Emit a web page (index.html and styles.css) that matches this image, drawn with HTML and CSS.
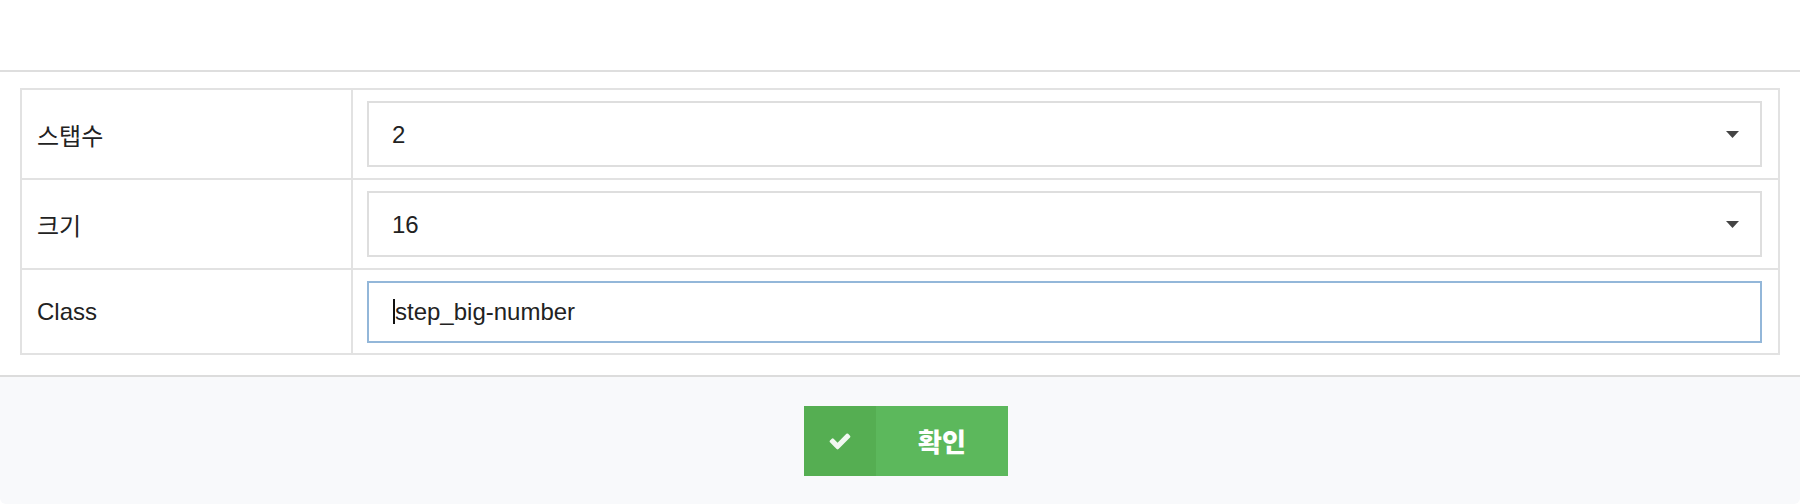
FILE: index.html
```html
<!DOCTYPE html>
<html lang="ko">
<head>
    <meta charset="UTF-8">
    <meta name="viewport" content="width=device-width, initial-scale=1.0">
    <title>Step Settings</title>
    <link rel="stylesheet" href="styles.css">
</head>
<body>
    <div class="modal">
        <div class="modal-header"></div>

        <div class="modal-body">
            <table class="form-table">
                <tbody>
                    <tr>
                        <th>스탭수</th>
                        <td>
                            <div class="select-wrap">
                                <select class="field">
                                    <option selected>2</option>
                                    <option>3</option>
                                    <option>4</option>
                                </select>
                                <svg class="caret" width="13" height="7" viewBox="0 0 13 7"><path d="M0 0h13L6.5 7z" fill="#444"/></svg>
                            </div>
                        </td>
                    </tr>
                    <tr>
                        <th>크기</th>
                        <td>
                            <div class="select-wrap">
                                <select class="field">
                                    <option>12</option>
                                    <option>14</option>
                                    <option selected>16</option>
                                </select>
                                <svg class="caret" width="13" height="7" viewBox="0 0 13 7"><path d="M0 0h13L6.5 7z" fill="#444"/></svg>
                            </div>
                        </td>
                    </tr>
                    <tr class="last-row">
                        <th>Class</th>
                        <td>
                            <div class="input-wrap">
                                <input type="text" class="field field-focus" value="step_big-number">
                                <span class="text-cursor"></span>
                            </div>
                        </td>
                    </tr>
                </tbody>
            </table>
        </div>

        <div class="modal-footer">
            <button class="btn-confirm">
                <span class="btn-icon">
                    <svg width="24" height="20" viewBox="0 0 1792 1450"><path d="M1671 395q0 40-28 68l-724 724-136 136q-28 28-68 28t-68-28l-136-136-362-362q-28-28-28-68t28-68l136-136q28-28 68-28t68 28l294 295 656-657q28-28 68-28t68 28l136 136q28 28 28 68z" fill="rgba(255,255,255,0.92)"/></svg>
                </span>
                <span class="btn-label">확인</span>
            </button>
        </div>
    </div>
</body>
</html>
```

FILE: styles.css
```css
body {
    font-family: "Liberation Sans", Arial, "Noto Sans CJK KR", sans-serif;
    margin: 0;
    padding: 0;
    background: #fff;
    color: #222;
}

.modal {
    width: 1800px;
    height: 504px;
    background: #fff;
    border-radius: 6px;
    overflow: hidden;
    display: flex;
    flex-direction: column;
    box-sizing: border-box;
}

.modal-header {
    height: 70px;
    border-bottom: 2px solid #dedede;
}

.modal-body {
    padding: 16px 20px 20px 20px;
}

.form-table {
    width: 100%;
    border-collapse: collapse;
    border: 2px solid #e2e2e2;
}

.form-table th,
.form-table td {
    border: 2px solid #e2e2e2;
    padding: 11px 16px 11px 14px;
    text-align: left;
    font-weight: normal;
    font-size: 24px;
}

.form-table th {
    width: 298px;
    padding-left: 15px;
}

.last-row td {
    padding-bottom: 10px;
}

.select-wrap,
.input-wrap {
    position: relative;
}

.field {
    display: block;
    width: 100%;
    height: 66px;
    box-sizing: border-box;
    border: 2px solid #dedede;
    border-radius: 0;
    background: #fff;
    padding: 0 20px 0 23px;
    font-family: inherit;
    font-size: 24px;
    color: #222;
    outline: none;
    -webkit-appearance: none;
    appearance: none;
}

.field-focus {
    height: 62px;
    padding-left: 26px;
    border-color: #93b7d9;
}

.caret {
    position: absolute;
    right: 23px;
    top: 30px;
    pointer-events: none;
}

.text-cursor {
    position: absolute;
    left: 26px;
    top: 18px;
    width: 2px;
    height: 25px;
    background: #111;
}

.modal-footer {
    flex: 1;
    background: #f8f9fb;
    border-top: 2px solid #dcdcdc;
    display: flex;
    justify-content: center;
    align-items: center;
}

.btn-confirm {
    display: flex;
    width: 204px;
    height: 70px;
    margin-left: 12px;
    padding: 0;
    border: none;
    background: #5cb85c;
    color: #fff;
    cursor: pointer;
    font-family: inherit;
}

.btn-icon {
    width: 72px;
    height: 100%;
    background: #55ae52;
    display: flex;
    align-items: center;
    justify-content: center;
}

.btn-label {
    flex: 1;
    display: flex;
    align-items: center;
    justify-content: center;
    font-family: "Noto Sans CJK KR", sans-serif;
    font-size: 26px;
    font-weight: 900;
}
```
